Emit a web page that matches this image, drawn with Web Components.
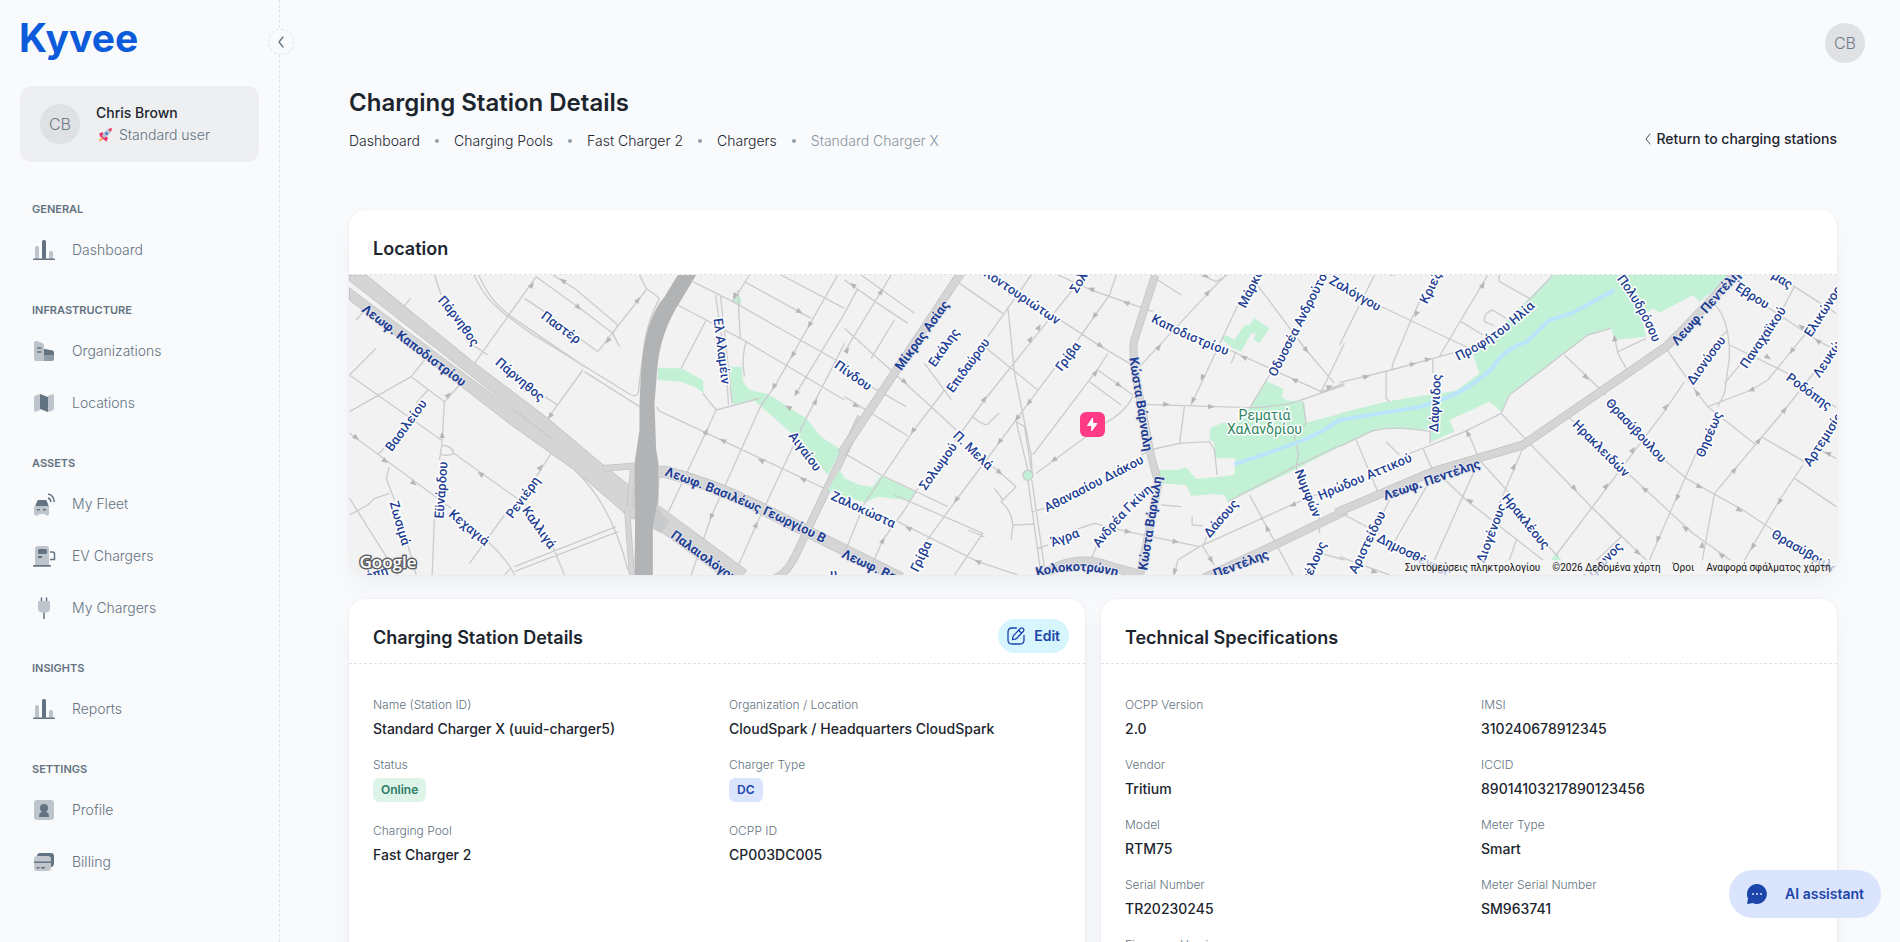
<!DOCTYPE html>
<html lang="en">
<head>
<meta charset="utf-8">
<title>Charging Station Details</title>
<style>
  html, body { margin: 0; height: 100%; }
  body { font-family: Inter, "Open Sans", sans-serif; font-size: 14px; line-height: 22px; color: #1c252e; background: #f9fafc; }
</style>
</head>
<body>
<ky-app>
  <ky-sidebar slot="nav">
    <ky-user name="Chris Brown" role-name="Standard user" initials="CB"></ky-user>
    <ky-nav-group label="General"><ky-nav-item icon="chart">Dashboard</ky-nav-item></ky-nav-group>
    <ky-nav-group label="Infrastructure">
      <ky-nav-item icon="building">Organizations</ky-nav-item>
      <ky-nav-item icon="map">Locations</ky-nav-item>
    </ky-nav-group>
    <ky-nav-group label="Assets">
      <ky-nav-item icon="car">My Fleet</ky-nav-item>
      <ky-nav-item icon="station">EV Chargers</ky-nav-item>
      <ky-nav-item icon="plug">My Chargers</ky-nav-item>
    </ky-nav-group>
    <ky-nav-group label="Insights"><ky-nav-item icon="chart">Reports</ky-nav-item></ky-nav-group>
    <ky-nav-group label="Settings">
      <ky-nav-item icon="profile">Profile</ky-nav-item>
      <ky-nav-item icon="cards">Billing</ky-nav-item>
    </ky-nav-group>
  </ky-sidebar>

  <ky-topbar slot="top"><ky-avatar>CB</ky-avatar></ky-topbar>
  <ky-page-head heading="Charging Station Details" back="Return to charging stations"
    trail="Dashboard|Charging Pools|Fast Charger 2|Chargers|Standard Charger X"></ky-page-head>

  <ky-card heading="Location" flush><ky-map></ky-map></ky-card>

  <ky-columns>
    <ky-card heading="Charging Station Details">
      <ky-edit slot="action">Edit</ky-edit>
      <ky-fields>
        <ky-field label="Name (Station ID)">Standard Charger X (uuid-charger5)</ky-field>
        <ky-field label="Organization / Location">CloudSpark / Headquarters CloudSpark</ky-field>
        <ky-field label="Status"><ky-chip tone="success">Online</ky-chip></ky-field>
        <ky-field label="Charger Type"><ky-chip tone="primary">DC</ky-chip></ky-field>
        <ky-field label="Charging Pool">Fast Charger 2</ky-field>
        <ky-field label="OCPP ID">CP003DC005</ky-field>
      </ky-fields>
    </ky-card>
    <ky-card heading="Technical Specifications">
      <ky-fields>
        <ky-field label="OCPP Version">2.0</ky-field>
        <ky-field label="IMSI">310240678912345</ky-field>
        <ky-field label="Vendor">Tritium</ky-field>
        <ky-field label="ICCID">89014103217890123456</ky-field>
        <ky-field label="Model">RTM75</ky-field>
        <ky-field label="Meter Type">Smart</ky-field>
        <ky-field label="Serial Number">TR20230245</ky-field>
        <ky-field label="Meter Serial Number">SM963741</ky-field>
        <ky-field label="Firmware Version"></ky-field>
      </ky-fields>
    </ky-card>
  </ky-columns>
  <ky-assistant slot="float">AI assistant</ky-assistant>
</ky-app>

<script>
const define = (name, render) => customElements.define(name, class extends HTMLElement {
  connectedCallback() {
    if (this.shadowRoot) return;
    this.attachShadow({ mode: 'open' }).innerHTML = render(this);
  }
});

define('ky-app', () => `
<style>
  :host { display: flex; height: 100vh; overflow: hidden; position: relative; }
  main { flex: 1; min-width: 0; overflow-y: auto; scrollbar-width: none; }
  .content { padding: 0 63px 64px 69px; display: flex; flex-direction: column; gap: 24px; }
</style>
<slot name="nav"></slot>
<main><slot name="top"></slot><div class="content"><slot></slot></div></main>
<slot name="float"></slot>`);

define('ky-sidebar', () => `
<style>
  :host { display: block; box-sizing: border-box; flex: 0 0 280px; border-right: 1px dashed #dfe3e8; position: relative; }
  .logo { display: block; padding: 14px 0 0 19px; font-size: 39px; font-weight: 700; line-height: 48px; color: #0b5bdb; text-decoration: none; }
  header { height: 86px; }
  button { position: absolute; top: 29px; right: -15px; width: 26px; height: 26px; padding: 0; border: 1px dashed #dfe3e8; border-radius: 50%; background: #f9fafc; color: #637381; display: grid; place-items: center; z-index: 2; }
</style>
<header><a class="logo" href="#">Kyvee</a></header>
<slot></slot>
<button aria-label="Collapse navigation"><svg width="14" height="14" viewBox="0 0 14 14" fill="none" stroke="currentColor" stroke-linecap="round" stroke-linejoin="round" stroke-width="1.3"><path d="M9 2 5 7l4 5"/></svg></button>`);

define('ky-avatar', () => `
<style>
  :host { display: grid; place-items: center; width: 40px; height: 40px; border-radius: 50%; background: #dfe1e4; color: #6f7b87; font-size: 16px; font-weight: 300; flex: none; }
</style><slot></slot>`);

define('ky-user', el => `
<style>
  :host { display: flex; align-items: center; gap: 16px; height: 76px; box-sizing: border-box; margin: 0 20px 15px; padding: 0 20px; border-radius: 12px; background: #eeeff1; }
  strong { display: block; font-weight: 500; }
  span { display: flex; gap: 6px; align-items: center; color: #637381; font-weight: 300; }
</style>
<ky-avatar>${el.getAttribute('initials')}</ky-avatar>
<div><strong>${el.getAttribute('name')}</strong>
<span><svg width="17" height="17" viewBox="0 0 17 17"><path d="M4 9 7 6l4 4-3 3z" fill="#ef2b63"/><path d="M3 7l3-2 2 2-3 3zM10 9l2 2-2 4-2-3z" fill="#ef2b63"/><path d="M6 9c1-4 5-7 9-7 0 4-3 8-7 9z" fill="#b9c4cf"/><path d="M12 2l4-1-1 4z" fill="#ef2b63"/><circle cx="10.500" cy="6.500" r="1.500" fill="#4b83d6"/><path d="M3 15l1-4 3 1z" fill="#f6a13a"/></svg>${el.getAttribute('role-name')}</span></div>`);

define('ky-nav-group', el => `
<style>
  :host { display: block; padding-bottom: 4px; }
  h2 { margin: 0; padding: 24px 32px 8px; font-size: 11px; line-height: 17px; font-weight: 600; text-transform: uppercase; color: #637381; }
  div { display: flex; flex-direction: column; gap: 4px; }
</style><h2>${el.getAttribute('label')}</h2><div><slot></slot></div>`);

const icons = {
  chart: '<g opacity=".4"><rect x="3" y="8" width="4" height="13" rx="1.500"/><rect x="17" y="13" width="4" height="8" rx="1.500"/></g><rect x="10" y="2" width="4" height="19" rx="1.500"/><rect x="1" y="20.500" width="22" height="1.500" rx=".7"/>',
  building: '<path opacity=".4" d="M2 22V4c0-1.500 1.500-2.500 3-2l5 2c1.500.600 2 1.500 2 3v15H4c-1.200 0-2-.800-2-2z"/><path opacity=".7" d="M12 10l8 1.500c1.300.300 2 1 2 2.500v6c0 1.200-.800 2-2 2h-8z"/><path d="M12 10l8 1.500c1.300.300 2 1 2 2.500v2H12z"/><path d="M5 8.200h4.500v1.600H5zM5 12.200h4.500v1.600H5z"/>',
  map: '<path opacity=".4" d="M2 7.500c0-1.800.3-2.500 1.500-3L8 3v16l-3.500 1.500C3 21 2 20.500 2 19zM22 16.500c0 1.800-.3 2.500-1.500 3L16 21V5l3.500-1.500C21 3 22 3.500 22 5z"/><path d="M8 3l8 3v15l-8-3z"/>',
  car: '<path opacity=".4" d="M3 14l1-3h11l2 3v8c0 1-1 1.500-2 1.500s-2-.5-2-1.500H7c0 1-1 1.500-2.500 1.500S2 23 2 22v-6z"/><path d="M5 9.500C5.400 8.300 6 8 7 8h6c1 0 1.600.3 2 1.500L16.500 14h-13z"/><path d="M5 17h3v1.500H5zM11 17h3v1.500h-3z"/><path d="M16 2c3.500.5 6 3.300 6.300 8M16 6c1.700.5 2.700 1.800 3 4" fill="none" stroke="currentColor" stroke-width="1.500"/>',
  station: '<path opacity=".4" d="M3 22V5c0-2 1-3 3-3h8c2 0 3 1 3 3v17z"/><rect x="6" y="5" width="9" height="5" rx="1.500"/><path d="M6 12h4v2H6z"/><rect x="1" y="21" width="18" height="1.800" rx=".9"/><path d="M18 8h2.500c1.300 0 2 .7 2 2v5.500h-4.500" fill="none" stroke="currentColor" stroke-width="1.500"/>',
  plug: '<path opacity=".4" d="M6 6.500C6 5.500 6.500 5 7.500 5h9c1 0 1.500.5 1.500 1.500V12c0 3-1.500 4.500-4 4.500h-4C7.500 16.500 6 15 6 12z"/><path d="M8.700 1.500h1.500V5H8.700zM13.800 1.500h1.500V5h-1.500zM11.300 16.500h1.500V23h-1.500z"/>',
  profile: '<rect opacity=".4" x="2" y="2" width="20" height="20" rx="3"/><circle cx="12" cy="10" r="4"/><path d="M10 12h4v2c2 .5 3 2 3 5H7c0-3 1-4.500 3-5z"/>',
  cards: '<path d="M5 7c0-3 1-4 3-4h11c2 0 3 1 3 3v7c0 2-1 4-3 4z"/><path d="M2 9c0-2 1-3 3-3h11c2 0 3 1 3 3v9c0 2-1 3-3 3H5c-2 0-3-1-3-3z" fill="#c1c7cd"/><path d="M2 11.500h17v1.500H2zM4.500 17h3v1.500h-3zM9 17h4v1.500H9z"/>'
};
define('ky-nav-item', el => `
<style>
  :host { display: block; }
  a { display: flex; align-items: center; gap: 16px; height: 48px; padding: 0 32px; color: #637381; font-weight: 300; text-decoration: none; }
  svg { flex: none; color: #637381; }
</style>
<a href="#"><svg width="24" height="24" viewBox="0 0 24 24" fill="currentColor">${icons[el.getAttribute('icon')]}</svg><slot></slot></a>`);

define('ky-topbar', () => `
<style>:host { display: flex; justify-content: flex-end; padding: 23px 35px 0 0; height: 62px; box-sizing: border-box; }</style><slot></slot>`);

define('ky-page-head', el => {
  const trail = el.getAttribute('trail').split('|');
  return `
<style>
  :host { display: flex; justify-content: space-between; align-items: flex-start; box-sizing: border-box; height: 124px; padding-top: 23px; }
  h1 { margin: 0 0 9px; font-size: 24px; line-height: 36px; font-weight: 600; }
  ol { display: flex; margin: 0; padding: 0; list-style: none; font-weight: 300; }
  li { display: flex; align-items: center; }
  li + li::before { content: ""; width: 4px; height: 4px; border-radius: 50%; background: #919eab; margin: 0 15px; }
  a { color: inherit; text-decoration: none; }
  li:last-child { color: #87949f; }
  .back { display: flex; align-items: center; gap: 5px; margin-top: 43px; font-weight: 500; }
</style>
<div><h1>${el.getAttribute('heading')}</h1>
<ol>${trail.map((t, i) => `<li>${i < trail.length - 1 ? `<a href="#">${t}</a>` : t}</li>`).join('')}</ol></div>
<a class="back" href="#"><svg width="7" height="12" viewBox="0 0 7 12" fill="none" stroke="#454f5b" stroke-linecap="round" stroke-linejoin="round"><path d="M6 1 2 6l4 5"/></svg>${el.getAttribute('back')}</a>`;
});

define('ky-columns', () => `
<style>:host { display: grid; grid-template-columns: 1fr 1fr; gap: 16px; }</style><slot></slot>`);

define('ky-card', el => `
<style>
  :host { display: block; background: #fff; border-radius: 16px; box-shadow: 0 0 2px rgba(145,158,171,.2), 0 12px 24px -4px rgba(145,158,171,.12); overflow: hidden; }
  header { display: flex; justify-content: space-between; align-items: center; height: 65px; box-sizing: border-box; padding: 10px 16px 0 24px; border-bottom: 1px dashed #dfe3e8; }
  h2 { margin: 0; padding-top: 4px; font-size: 18px; line-height: 28px; font-weight: 600; }
  .body { padding: ${el.hasAttribute('flush') ? '0' : '32px 24px 24px'}; }
</style>
<header><h2>${el.getAttribute('heading')}</h2><slot name="action"></slot></header><div class="body"><slot></slot></div>`);

define('ky-edit', () => `
<style>
  button { display: flex; align-items: center; gap: 8px; height: 34px; padding: 0 9px 0 8px; border: 0; border-radius: 17px; background: #d6f5fc; color: #1a45ab; font: 600 14px/22px Inter, sans-serif; }
</style>
<button><svg width="20" height="20" viewBox="0 0 20 20" fill="none" stroke="currentColor" stroke-width="1.300" stroke-linecap="round" stroke-linejoin="round"><path d="M10.500 2H6Q2 2 2 6v8q0 4 4 4h8q4 0 4-4V9.500"/><path d="M14.500 2.300q1.500-1 2.700.2t.2 2.700L11 12q-1 1-2 1.200l-2.500.3.400-2.500q.3-1 1.100-1.900zM13 4q.500 2 2.800 2.800"/></svg><slot></slot></button>`);

define('ky-fields', () => `
<style>:host { display: grid; grid-template-columns: 1fr 1fr; gap: 16px 24px; }</style><slot></slot>`);

define('ky-field', el => `
<style>
  dl, dd { margin: 0; }
  :host { display: block; }
  dt { margin-bottom: 4px; font-size: 12px; line-height: 18px; font-weight: 300; color: #637381; }
  dd { font-weight: 500; min-height: 22px; }
</style><dl><dt>${el.getAttribute('label')}</dt><dd><slot></slot></dd></dl>`);

define('ky-chip', el => `
<style>
  :host { display: flex; padding-bottom: 4px; }
  span { height: 24px; padding: 0 8px; border-radius: 6px; font-size: 12px; line-height: 24px; font-weight: 600;
    ${el.getAttribute('tone') === 'success' ? 'background: #def4e8; color: #2c7a66;' : 'background: #dbe4fd; color: #1d46ab;'} }
</style><span><slot></slot></span>`);

define('ky-assistant', () => `
<style>
  :host { position: absolute; right: 19px; bottom: 24px; z-index: 3; }
  button { display: flex; align-items: center; gap: 18px; height: 48px; padding: 0 17px 0 18px; border: 0; border-radius: 24px; background: #dbe4fd; color: #1d46ab; font: 600 14px/22px Inter, sans-serif; }
</style>
<button><svg width="20" height="20" viewBox="0 0 20 20"><path fill="currentColor" d="M10 0a10 10 0 1 1-4.500 19L1 20q-1 0-.800-1L1 14.500A10 10 0 0 1 10 0z"/><g fill="#dbe4fd"><circle cx="6" cy="10" r="1"/><circle cx="10" cy="10" r="1"/><circle cx="14" cy="10" r="1"/></g></svg><slot></slot></button>`);

/* Street map. Geometry is kept in three tiles of 500 by 310 units, drawn at triple resolution. */
const tiles = [
  { x: -4,
    park: 'M940 295 1010 295 1075 330 1078 370 1050 350 1010 335 940 330zM1155 290 1193 290 1195 335 1215 360 1270 372 1385 445 1430 500 1490 540 1450 615 1370 515 1230 392 1165 403zM1160 95 1180 70 1190 85 1190 105z',
    minor: 'M270 15 290 75M370 215 430 255M600 380 640 405M35 150 75 105M165 125 198 85M575 20 390 280M388 15Q420 80 450 105L490 140 560 190 860 375Q885 385 883 350L900 220Q910 150 945 85M402 15Q430 75 460 105L500 140 720 290M720 305 885 410M575 20 700 110 805 190 825 230M625 15 690 55 820 165 805 190M540 85 630 145M705 205 760 245 905 60M885 15 905 55 945 85M715 300 610 445M15 315 95 235M15 315 290 510M15 425 200 320 240 270M200 320 300 395 345 345M300 395 292 525 285 570M270 740 263 915M250 360 215 400M130 520 100 555M15 490 320 715M430 815Q490 870 510 915M290 525Q325 528 328 550Q310 560 287 553M328 550 545 705M625 830 660 915M15 685 160 915M135 590 125 625 150 690M135 670 90 685 70 705 15 735M190 825 215 915M620 550 575 620M480 735 375 880M510 890 815 770M510 905 820 785M500 893 480 915M690 600Q800 700 850 900M1045 35 1165 95 1500 285M1000 105 1085 150 1205 215 1500 390M1085 150 1010 295M1113 75 1145 290 1152 405M1128 75 1163 400M1180 60 1187 205M1215 15 1165 95M1200 35 1400 145M1310 15 1500 115M1480 15 1290 350 1250 405 1100 740 1040 915M1500 220 1385 445 1235 765 1180 890M1075 370 1115 420 1245 385M1115 420 1085 485 965 740M937 410Q940 425 960 430L1450 660M1205 215Q1190 260 1200 320M1500 130 1355 370M1480 600 1500 630',
    major: 'M15 15 65 15 385 275 610 445 770 580 872 660 872 748 850 740 830 720 690 600 500 465 300 310 15 90z',
    gap: 'M12 30 620 505 12 52z',
    wide: [['M870 588 775 595', 16], ['M866 590 855 710', 14], ['M848 720 862 915', 14], ['M935 605 960 605Q1100 640 1240 710L1500 840 1670 925', 32], ['M925 730 1190 925', 56], ['M1550 440 1370 820Q1330 915 1290 925', 20], ['M935 590 930 720', 18]],
    highway: 'M1000 15 1055 15 1010 90Q945 190 938 300L930 400 935 540 942 580 940 690 925 770 925 915 870 915 872 740 870 580 885 480 885 400 890 300Q900 150 960 80z',
    arrows: [[562,45,-55],[655,32,215],[702,112,40],[880,90,-55],[790,212,125],[617,438,125],[312,375,-45],[293,495,-88],[35,503,38],[122,573,38],[208,640,38],[408,612,215],[588,592,-55],[775,595,180],[855,690,95],[1170,78,120],[1365,125,30],[1395,165,118],[1345,255,118],[1288,350,118],[1355,370,118],[1413,395,-62],[1332,412,210],[1085,485,-65],[1135,512,205],[1250,572,205],[1375,628,205],[1100,740,112],[1235,765,-65]]
  },
  { x: 496,
    park: 'M-15 600 0 625 45 645 85 650 110 615 210 665 200 692 100 680 60 697 0 680-50 660zM1130 205 1145 195 1170 210 1200 165 1215 165 1230 145 1275 175 1245 220 1228 208 1235 190 1220 190 1190 245 1165 235zM1265 333 1318 358 1310 380 1330 392 1370 392 1380 400 1385 458 1505 427 1505 520 1350 600 1150 695 1140 675 1110 672 1040 678 1025 645 945 640 935 600 1000 600 1025 592 1055 628 1170 615 1172 565 1112 565 1108 515 1095 510 1097 475 1130 460 1190 455 1215 413z',
    minor: 'M0 30 100 100 190 160M50 15 210 130M345 40 475 130M140 15 0 245M0 175 260 410 335 480M440 585 515 650M0 380 190 498M0 550 110 615 310 710M150 675 415 790 330 915M80 350 185 410M240 280 320 388M40 55 0 130M150 150 80 265M560 15 430 200M300 360 205 485 60 700 0 850M720 15 560 215 420 390 330 515M220 655 180 720 115 810 80 890M815 15 795 75 700 210M630 295 555 395 470 510 335 690 245 815M490 110 510 310 560 555 563 610M515 455 540 470 562 610M515 455 550 600M550 630 590 915M562 630 603 915M420 230 580 360M640 145 770 230 855 280M790 250 765 290 565 555M865 380Q840 430 780 460L575 610M760 300 865 375M735 335 830 405M385 440Q420 470 430 462L463 430M640 15 740 60 925 125M1155 240 1430 365 1500 340M1145 15 1090 70 885 290M1180 105 1040 405M1215 40 1235 40 1385 240 1470 340M1275 315 1215 415M1500 220 1430 365M940 30 1010 75M1070 15 1115 35 1150 15M895 403 1215 413Q1320 410 1370 390L1500 345M1020 410 1005 520M915 540 1005 520 1095 515 1110 540 1118 615M600 715 565 725M920 540 890 555M950 705 1010 710M610 825 580 835M690 780 750 760 850 785 1065 830 1340 705 1500 640M1065 830 1000 870 990 915M1075 830 1110 885M760 820 730 890M515 650 470 695Q500 720 505 765L570 762M505 765 500 810M450 655 475 690M160 755 400 875 520 915M1150 695 1350 590 1500 520M1215 675 1345 915M1100 770 1075 830M1385 458 1350 500 1362 550 1355 590 1370 640M1425 730 1425 790M1043 740 1043 765 1075 767M1175 245 1160 280M1375 395 1385 458M420 800 370 780M1430 850 1500 870',
    wide: [['M352 5-10 550', 22], ['M932 15 868 215Q865 250 870 300L920 560 942 640 885 925', 20], ['M585 925Q680 845 800 890L890 915', 24], ['M1075 925 1280 830 1505 722', 22]],
    roundabout: [550, 616],
    arrows: [[25,45,215],[110,65,-60],[180,335,40],[35,407,28],[8,240,-60],[205,483,125],[740,57,200],[845,98,200],[750,138,125],[583,172,-58],[558,207,-58],[420,387,-58],[553,398,125],[518,445,125],[465,515,125],[335,690,125],[768,227,33],[943,232,-48],[1090,68,-50],[1385,240,52],[1198,262,205],[1350,330,205],[1455,350,-20],[1073,323,115],[1045,392,115],[965,403,0],[1100,410,0],[753,308,-52],[823,345,33],[628,570,145],[465,607,40],[192,775,205],[400,875,205],[115,812,-60],[850,785,10],[993,815,10],[1345,705,157],[1268,775,-115],[1100,870,60],[990,905,110],[1085,18,30]]
  },
  { x: 991,
    park: 'M0 430 140 395 200 385 350 362 420 310 400 250 640 15 1180 15 1080 95 1060 75 960 128 940 115 905 140 920 200 825 210 815 175 745 195 515 370 485 425 450 395 330 450 345 485 275 515 272 480 120 475 0 530zM635 870 650 848 668 872z',
    minor: 'M105 15 0 225M115 105 400 240M240 95 215 150 160 280 157 300M0 338 155 300 270 268 355 245M445 15 300 258M478 15 480 35 570 85M640 15 560 100M365 155 430 195M500 145 460 120Q430 130 435 155L465 168M140 305 140 385 150 395M280 268 280 310M272 480 272 520M0 530 100 482Q170 465 272 485M50 510 115 665M200 555 375 485 485 430 510 375 745 195 815 175M140 515 180 555M250 535 275 590 380 690 610 870M485 430 570 520 755 710 930 880M385 485 420 570 510 670M620 820 655 860M290 600 150 840M15 735 120 790M410 590 285 870M550 535 480 700M530 810 510 870M0 860 150 915M845 800 725 915M845 800 760 715M675 255 800 375M975 570 1040 625 1210 720 1300 780M690 445 710 460M865 610 1060 790 1200 890M825 200 835 250 860 295M835 245 920 205M980 235 1070 365 1105 410 1250 525M1035 335 970 430 650 855M1165 180 1145 200M1110 90Q1170 130 1170 260L1155 370 1135 410M1170 225 1345 310M1465 395 1490 412M1205 280 1155 340M1325 125 1365 50M1350 40 1490 130M1275 105 1440 215 1490 240M1395 195 1285 330 1235 360 1105 410M1430 300 1335 420 1125 670 1085 890M1070 550 1010 685 930 870M1265 500 1395 575M1390 585 1320 690 1215 870M1365 625 1490 710M1420 530 1490 565M150 690 130 730M165 15 150 15',
    wide: [['M-10 728 280 605 550 525 980 230Q1100 110 1190 5', 22]],
    arrows: [[80,320,-15],[220,282,-15],[265,268,-10],[230,132,115],[430,45,-60],[740,322,45],[825,205,-95],[385,490,-115],[705,655,45],[523,590,-68],[390,692,215],[980,410,-52],[880,540,-52],[800,648,-52],[895,848,45],[1072,368,-125],[1285,262,35],[1385,170,215],[1435,213,215],[1357,243,125],[1235,360,160],[1335,420,-52],[1258,512,-52],[1185,600,-52],[915,658,215],[1037,775,215],[1145,855,215],[1080,650,28],[1200,720,28],[1013,683,112],[955,808,112],[1088,825,-82],[1320,695,118],[1240,830,118],[1465,550,205],[105,905,20]]
  }
];

/* text, tile, centre line from (x1,y1) to (x2,y2), size class, optional bend */
const labels = [
  ['Λεωφ. Καποδιστρίου',0,60,112,355,332,'b'],['Πάρνηθος',0,293,92,388,218,'n',-5],['Πάρνηθος',0,460,268,592,378,'n'],['Παστέρ',0,595,128,700,205,'n'],
  ['Βασιλείου',0,128,530,230,392,'n'],['Εϋνάρδου',0,278,740,290,575,'n'],['Ζωσιμά',0,145,692,182,822,'n'],['Κεχαγιά',0,320,725,425,812,'n'],['Ρενιέρη',0,490,735,572,622,'n'],['Καλλιγά',0,543,712,623,825,'n'],
  ['Ελ Αλαμέιν',0,1118,142,1143,338,'n'],['Αιγαίου',0,1342,490,1418,592,'n'],['Λεωφ. Βασιλέως Γεωργίου Β',0,965,605,1440,808,'b',-8],['Παλαιολόγου',0,978,784,1178,928,'b'],['όπη',0,62,915,125,895,'n'],
  ['Πίνδου',1,-25,278,72,345,'n'],['Μίκρας Ασίας',1,155,290,298,92,'b'],['Εκάλης',1,262,275,328,180,'n'],['Επιδαύρου',1,312,355,420,208,'n'],['Κοντουριώτων',1,425,2,635,145,'n'],['Σολωμού',1,228,652,325,518,'n'],['Σολωμού',1,678,62,765,-80,'n'],
  ['Γρίβα',1,635,295,695,215,'n'],['Π. Μελά',1,333,488,433,585,'n'],['Ζαλοκώστα',1,-45,668,152,758,'n'],['Λεωφ. Βασιλέως',1,5,850,260,968,'b'],['Γρίβα',1,202,900,245,812,'n'],['υ',0,1455,905,1470,905,'n'],
  ['Κώστα Βάρναλη',1,865,260,908,535,'b'],['Κώστα Βάρναλη',1,890,892,935,620,'b'],['Αθανασίου Διάκου',1,600,710,885,562,'n'],['Ανδρέα Γκίνη',1,765,815,905,665,'n',-6],['Άγρα',1,620,812,692,785,'n'],['Κολοκοτρώνη',1,580,915,815,915,'b',-18],
  ['Καποδιστρίου',1,930,140,1150,238,'n',5],['Μάρκου',1,1183,110,1250,-25,'n'],['Οδυσσέα Ανδρούτσου',1,1275,312,1452,-30,'n'],['Ζαλόγγου',1,1460,25,1600,105,'n'],['Δάσους',1,1090,780,1160,700,'n'],['Νυμφών',1,1365,605,1413,725,'n'],['Ηρώδου Αττικού',1,1430,668,1682,560,'n'],['Λεωφ. Πεντέλης',1,990,952,1262,845,'b'],['τέλους',1,1380,920,1425,820,'n'],
  ['Κριεζή',2,248,92,300,-15,'n'],['Προφήτου Ηλία',2,360,248,562,105,'n',10],['Δάφνιδος',2,278,482,288,312,'n'],['Πολυδρόσου',2,842,25,948,210,'n',-8],['Λεωφ. Πεντέλης',2,1003,210,1200,-5,'b'],['Έβρου',2,1195,48,1275,98,'n'],['μας',2,1302,8,1348,38,'n'],['Ελικώνος',2,1402,188,1492,50,'n'],['Παναχαϊκού',2,1212,278,1320,120,'n'],['Λευκών',2,1425,310,1500,200,'n'],['Ροδόπης',2,1345,315,1468,405,'n'],['Διονύσου',2,1045,335,1142,200,'n'],['Θρασύβουλου',2,805,390,968,562,'n'],['Ηρακλειδών',2,705,455,860,608,'n'],['Θησέως',2,1075,552,1130,425,'n'],['Αρτεμισίου',2,1398,582,1508,410,'n'],['Λεωφ. Πεντέλης',2,135,670,412,575,'b'],['Αριστείδου',2,35,903,122,725,'n'],['Δημοσθένους',2,120,800,325,905,'n'],['Διογένους',2,422,862,480,708,'n'],['Ηρακλέους',2,503,680,615,820,'n'],['Αίμωνος',2,735,920,830,825,'n'],['Θρασύβουλου',2,1300,785,1510,905,'n']
];

const drawTile = t => `<g transform="translate(${t.x} -5) scale(.33333)">
  <path d="${t.park}" fill="#c3f1d5"/>
  <path d="${t.minor}" class="minor"/>
  ${t.arrows.map(([x, y, a]) => `<path class="arrow" transform="translate(${x} ${y}) rotate(${a})" d="M-9-8 11 0-9 8z"/>`).join('')}
  ${t.major ? `<path d="${t.major}" fill="#d5d5d5" stroke="#c2c3c4" stroke-width="3"/><path d="${t.gap}" fill="#f2f2f2" stroke="#c6c7c8" stroke-width="3"/>` : ''}
  ${t.wide.map(([d, w]) => `<path d="${d}" fill="none" stroke="#c0c1c2" stroke-width="${w + 4}"/>`).join('')}
  ${t.wide.map(([d, w]) => `<path d="${d}" fill="none" stroke="#d5d5d5" stroke-width="${w}"/>`).join('')}
  ${t.highway ? `<path d="M912 715H940L975 755 950 790 912 770z" fill="#c9cacb"/><path d="${t.highway}" fill="#b1b3b5"/>` : ''}
  ${t.roundabout ? `<circle cx="${t.roundabout[0]}" cy="${t.roundabout[1]}" r="15" fill="#c3f1d5" stroke="#c8c9ca" stroke-width="4"/>` : ''}
</g>`;

const drawLabel = ([text, tile, x1, y1, x2, y2, size, bend], i) => {
  const px = x => tiles[tile].x + x / 3, py = y => y / 3 - 5;
  const ax = px(x1), ay = py(y1), bx = px(x2), by = py(y2);
  const mx = (ax + bx) / 2, my = (ay + by) / 2;
  const angle = Math.atan2(by - ay, bx - ax);
  if (!bend) return `<text class="${size}" dy="5" text-anchor="middle" transform="translate(${(mx + 1).toFixed(0)} ${(my + 1).toFixed(0)}) rotate(${(angle * 180 / Math.PI).toFixed(0)})">${text}</text>`;
  const nx = -Math.sin(angle), ny = Math.cos(angle), ex = Math.cos(angle) * 12, ey = Math.sin(angle) * 12;
  return `<path id="way${i}" fill="none" d="M${ax - ex} ${ay - ey}Q${mx + nx * bend} ${my + ny * bend} ${bx + ex} ${by + ey}"/><text class="${size}" dy="5" text-anchor="middle"><textPath href="#way${i}" startOffset="50%">${text}</textPath></text>`;
};

define('ky-map', () => `
<style>
  :host { display: block; position: relative; height: 300px; overflow: hidden; background: #f2f2f2; }
  .streets { display: block; width: 100%; height: 100%; font-family: Roboto, sans-serif; }
  .minor { fill: none; stroke: #cbcccd; stroke-width: 4; stroke-linejoin: round; }
  .arrow { fill: #b5b7b9; }
  text { fill: #1f3f93; stroke: #fff; stroke-width: 3px; stroke-linejoin: round; paint-order: stroke; }
  .n { font-size: 13px; font-weight: 500; }
  .b { font-size: 13px; font-weight: 700; stroke: #e6e7ec; stroke-width: 2px; }
  .p { font-size: 14px; fill: #2f8563; }
  .g { font-family: "Open Sans", sans-serif; font-size: 17px; font-weight: 600; fill: #fff; stroke: #5c5f62; }
  footer { position: absolute; right: 0; bottom: 0; display: flex; gap: 12px; padding: 1px 6px 0 5px; height: 14px; background: rgba(245,245,245,.7); font: 10px/14px Roboto, sans-serif; color: #111; }
  footer a { color: inherit; text-decoration: none; }
  .pin { position: absolute; left: 50%; top: 137px; margin-left: -13px; width: 25px; height: 25px; padding: 0; border: 0; border-radius: 6px; background: #ff3a86; display: grid; place-items: center; }
</style>
<svg class="streets" viewBox="0 0 1489 300" preserveAspectRatio="xMidYMid slice">
  ${tiles.map(drawTile).join('')}
  <path d="M886 189Q965 164 980 152L991 145 1071 132Q1118 119 1144 93 1154 75 1178 67L1201 45 1224 38 1266 15" fill="none" stroke="#b9e5fa" stroke-width="4"/>
  ${labels.map(drawLabel).join('')}
  <text class="p" x="916" y="145" text-anchor="middle">Ρεματιά</text>
  <text class="p" x="916" y="159" text-anchor="middle">Χαλανδρίου</text>
  <text class="g" x="11" y="293">Google</text>
</svg>
<button class="pin" aria-label="Charging station"><svg width="15" height="17" viewBox="0 0 15 17"><path fill="#fff" stroke="#fff" stroke-linejoin="round" d="M7.500 2 2.500 9.500H7L6.500 15 12 7.500H7.800z"/></svg></button>
<footer><a href="#">Συντομεύσεις πληκτρολογίου</a><span>©2026 Δεδομένα χάρτη</span><a href="#">Όροι</a><a href="#">Αναφορά σφάλματος χάρτη</a></footer>`);
</script>
</body>
</html>
